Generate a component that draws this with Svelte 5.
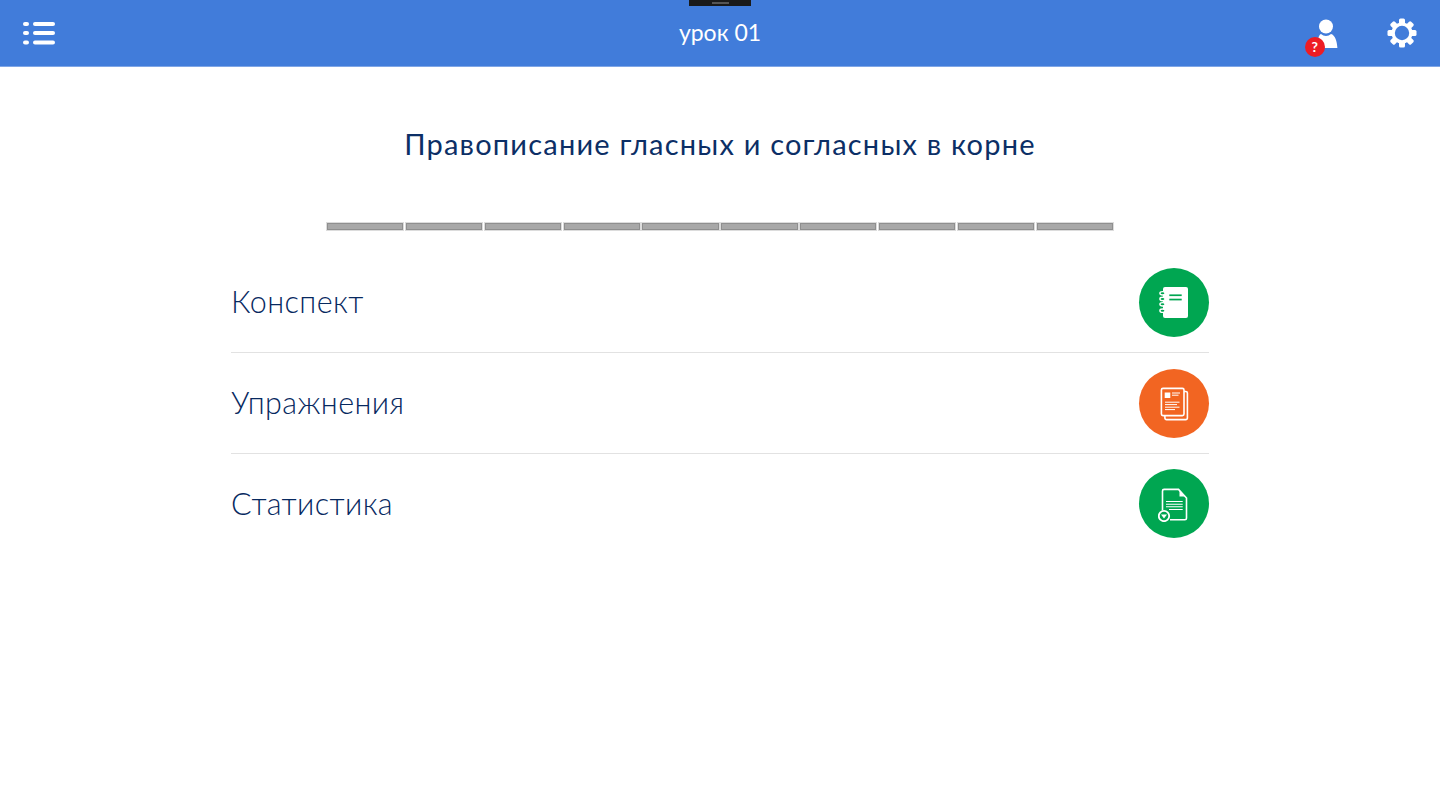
<script>
  const segments = Array.from({ length: 10 }, (_, i) => i);
</script>

<div class="page">
  <header class="bar">
    <button class="icon-btn" aria-label="Меню">
      <svg width="32" height="24" viewBox="0 0 32 24" fill="#fff">
        <rect x="0" y="1" width="6" height="4" rx="2" />
        <rect x="0" y="10" width="6" height="4" rx="2" />
        <rect x="0" y="19.5" width="6" height="4" rx="2" />
        <rect x="10" y="1" width="22" height="4" rx="2" />
        <rect x="10" y="10" width="22" height="4" rx="2" />
        <rect x="10" y="19.5" width="22" height="4" rx="2" />
      </svg>
    </button>
    <div class="lesson">урок 01</div>
    <div class="actions">
      <div class="user">
        <svg width="24" height="30" viewBox="0 0 24 30" fill="#fff">
          <circle cx="12" cy="7.5" r="7" />
          <path d="M7 15 C8.5 16.2 10 17 12 17 C14 17 15.5 16.2 17 15 C21 16 23 22 23.4 29 L3.4 29 C3.8 22 4 16 7 15 Z" />
        </svg>
        <span class="badge">?</span>
      </div>
      <svg class="gear" width="30" height="30" viewBox="0 0 30 30">
        <g fill="#fff">
          <rect x="12" y="0.5" width="6" height="29" rx="1.5" />
          <rect x="12" y="0.5" width="6" height="29" rx="1.5" transform="rotate(45 15 15)" />
          <rect x="12" y="0.5" width="6" height="29" rx="1.5" transform="rotate(90 15 15)" />
          <rect x="12" y="0.5" width="6" height="29" rx="1.5" transform="rotate(135 15 15)" />
          <circle cx="15" cy="15" r="10.5" />
        </g>
        <circle cx="15" cy="15" r="7.2" fill="#417cda" />
      </svg>
    </div>
    <div class="notch"><span></span></div>
  </header>

  <main class="content">
    <h1>Правописание гласных и согласных в корне</h1>

    <div class="progress">
      {#each segments as s (s)}
        <div class="segment"></div>
      {/each}
    </div>

    <ul class="list">
      <li>
        <span class="label">Конспект</span>
        <div class="circle green">
          <svg width="32" height="32" viewBox="0 0 32 32">
            <rect x="5" y="0" width="25" height="31" rx="2" fill="#fff" />
            <g fill="#00a651" stroke="#fff" stroke-width="1.4">
              <ellipse cx="4.5" cy="6.3" rx="2.6" ry="1.7" />
              <ellipse cx="4.5" cy="12" rx="2.6" ry="1.7" />
              <ellipse cx="4.5" cy="17.3" rx="2.6" ry="1.7" />
              <ellipse cx="4.5" cy="23.7" rx="2.6" ry="1.7" />
            </g>
            <rect x="11.3" y="7.4" width="12.4" height="1.7" fill="#00a651" />
            <rect x="11.3" y="11.7" width="12.4" height="1.7" fill="#00a651" />
          </svg>
        </div>
      </li>
      <li>
        <span class="label">Упражнения</span>
        <div class="circle orange">
          <svg width="32" height="34" viewBox="0 0 32 34" fill="none" stroke="#fff" stroke-width="1.6">
            <path d="M26 4.5 H27.8 a1.6 1.6 0 0 1 1.6 1.6 V31 a1.6 1.6 0 0 1 -1.6 1.6 H8.5 a1.6 1.6 0 0 1 -1.6 -1.6 V29" />
            <rect x="3.4" y="1.4" width="22.6" height="27.2" rx="1.6" />
            <rect x="6.7" y="5.5" width="5.6" height="5.5" fill="#fff" stroke="none" />
            <path d="M14 6 H22 M14 8.2 H20.5 M7 15.2 H21.5 M7 17.6 H19 M7 20.2 H21.5 M7 22.6 H17" stroke-width="1" />
          </svg>
        </div>
      </li>
      <li>
        <span class="label">Статистика</span>
        <div class="circle green2">
          <svg width="32" height="36" viewBox="0 0 32 36" fill="none" stroke="#fff" stroke-width="1.6">
            <path d="M4.5 24.5 V5 a1.6 1.6 0 0 1 1.6 -1.6 H20.5 L28.5 12 V32.2 a1.6 1.6 0 0 1 -1.6 1.6 H12" />
            <path d="M21.5 4.5 V10.5 H27 Z" fill="#fff" stroke="none" />
            <path d="M8 15.5 H24.7 M8 18.2 H24.7 M8 20.8 H24.7 M11 23.5 H24.7" stroke-width="1.1" />
            <circle cx="6" cy="30" r="5.2" fill="#00a651" stroke-width="1.8" />
            <path d="M3 28.5 H9 L6 32.5 Z" fill="#fff" stroke="none" />
          </svg>
        </div>
      </li>
    </ul>
  </main>
</div>

<style>
  :global(body) {
    margin: 0;
    background: #fff;
  }

  .page {
    width: 1440px;
    height: 810px;
    overflow: hidden;
    font-family: "Lato", "Open Sans", sans-serif;
  }

  .bar {
    position: relative;
    height: 66px;
    background: #417cda;
    border-bottom: 1px solid #7fa6e6;
    display: flex;
    align-items: center;
    padding: 0 23px;
  }

  .icon-btn {
    border: 0;
    background: none;
    padding: 0;
    display: flex;
  }

  .lesson {
    position: absolute;
    left: 0;
    right: 0;
    top: 18px;
    text-align: center;
    color: #fff;
    font-size: 23px;
    line-height: 28px;
  }

  .actions {
    margin-left: auto;
    display: flex;
    align-items: center;
    gap: 49px;
  }

  .user {
    position: relative;
    display: flex;
    margin-top: 1px;
  }

  .badge {
    position: absolute;
    left: -9.5px;
    top: 18px;
    width: 20.5px;
    height: 20.5px;
    border-radius: 50%;
    background: #ed1c24;
    color: #fff;
    font-size: 14px;
    font-weight: 700;
    line-height: 20.5px;
    text-align: center;
  }

  .notch {
    position: absolute;
    left: 689px;
    top: 0;
    width: 62px;
    height: 6px;
    background: #1a1a1a;
    display: flex;
    justify-content: center;
    align-items: flex-start;
  }

  .notch span {
    width: 17px;
    height: 2px;
    margin-top: 2px;
    background: #555;
  }

  .content {
    display: flex;
    flex-direction: column;
    align-items: center;
  }

  h1 {
    margin: 57px 0 0;
    color: #0c2f66;
    font-size: 29px;
    font-weight: 400;
    letter-spacing: 1.2px;
    line-height: 40px;
  }

  .progress {
    margin-top: 59px;
    width: 786px;
    display: flex;
    gap: 2.6px;
  }

  .segment {
    flex: 1;
    height: 7px;
    box-sizing: border-box;
    background: #a8a8a8;
    border: 1px solid #8f8f8f;
    outline: 1px solid #dcdcdc;
  }

  .list {
    list-style: none;
    margin: 22px 0 0;
    padding: 0;
    width: 978px;
  }

  li {
    height: 101px;
    padding-top: 1px;
    display: flex;
    align-items: center;
    justify-content: space-between;
    box-sizing: border-box;
    border-bottom: 1px solid #e2e2e2;
  }

  li:last-child {
    height: 99px;
    border-bottom-color: transparent;
  }

  .label {
    padding-bottom: 4px;
    color: #07295f;
    font-size: 30.5px;
    font-weight: 300;
    letter-spacing: 0.4px;
  }

  li:last-child .label {
    padding-bottom: 1px;
  }

  .circle {
    width: 70px;
    height: 69px;
    border-radius: 50%;
    display: flex;
    align-items: center;
    justify-content: center;
  }

  .green,
  .green2 {
    background: #00a651;
  }

  .orange {
    background: #f26522;
  }
</style>
